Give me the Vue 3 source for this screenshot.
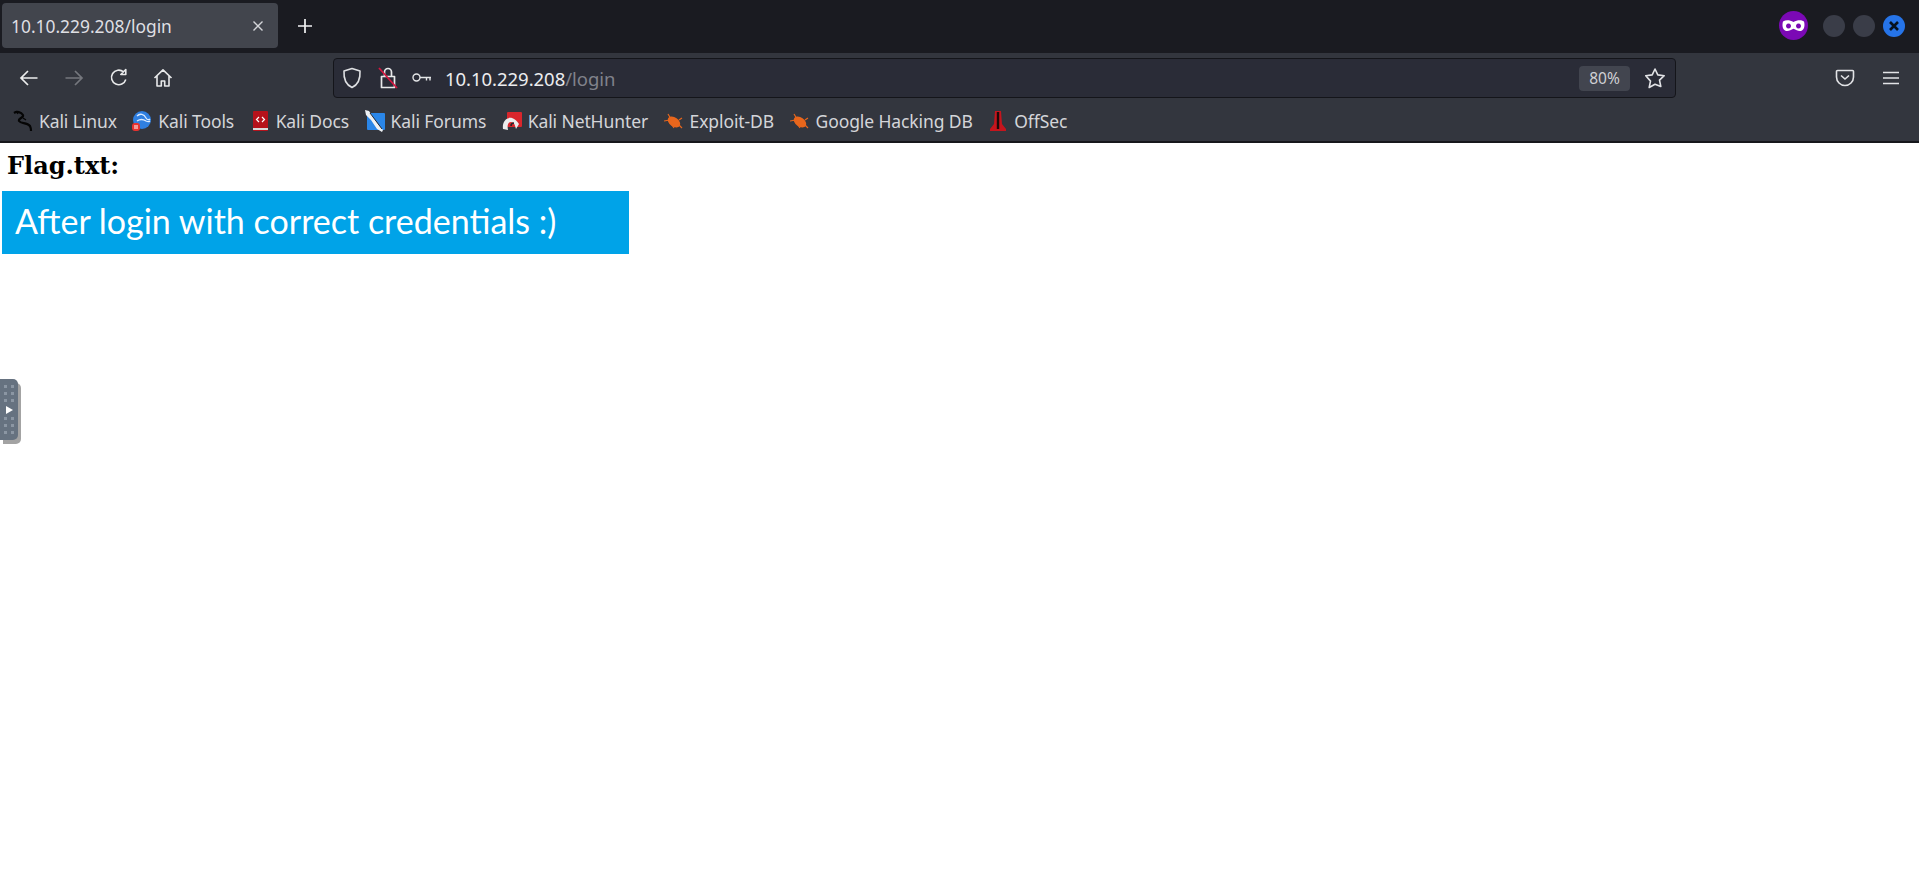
<script setup>
const bookmarks = [
  { id: 'dragon', label: 'Kali Linux' },
  { id: 'tools', label: 'Kali Tools' },
  { id: 'docs', label: 'Kali Docs' },
  { id: 'forums', label: 'Kali Forums' },
  { id: 'hunter', label: 'Kali NetHunter' },
  { id: 'bug', label: 'Exploit-DB' },
  { id: 'bug', label: 'Google Hacking DB' },
  { id: 'offsec', label: 'OffSec' }
]
const dots = Array.from({ length: 6 })
</script>

<template>
  <div class="page">
    <header class="tabbar">
      <div class="tab">
        <span class="tab-title">10.10.229.208/login</span>
        <svg class="tab-close" width="12" height="12" viewBox="0 0 12 12"><path d="M1.5 1.5l9 9M10.5 1.5l-9 9" stroke="#d4d5d9" stroke-width="1.4" fill="none"/></svg>
      </div>
      <svg class="new-tab" width="16" height="16" viewBox="0 0 16 16"><path d="M8 1v14M1 8h14" stroke="#f2f2f4" stroke-width="1.7" fill="none"/></svg>
      <div class="tabbar-right">
        <svg class="mask" width="29" height="29" viewBox="0 0 29 29">
          <circle cx="14.5" cy="14.5" r="14.5" fill="#7b09b5"/>
          <path fill-rule="evenodd" fill="#fff" d="M4 10.500c3-2 7-1.500 10.500.5 3.500-2 7.500-2.500 10.500-.5 1 3.500.5 7.500-2 9-3 1.500-5.500-.5-8.500-1.800-3 1.300-5.500 3.300-8.500 1.800-2.500-1.500-3-5.500-2-9zM9.500 12.500a2.500 2.500 0 1 0 .01 0zM19.500 12.500a2.500 2.500 0 1 0 .01 0z"/>
        </svg>
        <span class="win-btn first"></span>
        <span class="win-btn"></span>
        <span class="win-btn close">
          <svg width="12" height="12" viewBox="0 0 12 12"><path d="M2 2l8 8M10 2l-8 8" stroke="#06121f" stroke-width="2.600" fill="none"/></svg>
        </span>
      </div>
    </header>

    <div class="toolbar">
      <svg class="nav back" width="20" height="18" viewBox="0 0 20 18"><path d="M18.500 9H2M9 2L2 9l7 7" stroke="#eceded" stroke-width="1.700" fill="none"/></svg>
      <svg class="nav fwd" width="20" height="18" viewBox="0 0 20 18"><path d="M1.500 9H18M11 2l7 7-7 7" stroke="#75777d" stroke-width="1.700" fill="none"/></svg>
      <svg class="nav reload" width="20" height="22" viewBox="0 0 20 20"><path d="M16.800 11.500A7.300 7.300 0 1 1 14.500 3.800M16.800 1.500v5h-5z" stroke="#e8e9ea" stroke-width="1.600" fill="none" stroke-linejoin="round"/></svg>
      <svg class="nav home" width="20" height="22" viewBox="0 0 20 20"><path d="M1.500 10L10 1.800l8.500 8.200M4 8v10h4.300v-5h3.400v5H16V8" stroke="#e8e9ea" stroke-width="1.600" fill="none" stroke-linejoin="round"/></svg>

      <div class="urlbar">
        <svg class="u-shield" width="20" height="22" viewBox="0 0 20 22"><path d="M10 1.500l8 2.500c.5 8-1.500 13.500-8 16.500C3.500 17.500 1.500 12 2 4z" stroke="#dfe0e3" stroke-width="1.600" fill="none" stroke-linejoin="round"/></svg>
        <svg class="u-lock" width="20" height="24" viewBox="0 0 20 24">
          <path d="M6.500 10V6a3.500 3.500 0 0 1 7 0v4M3.500 10.500h13v11h-13z" stroke="#e8e9ea" stroke-width="1.700" fill="none" stroke-linejoin="round"/>
          <path d="M1 2l18 20" stroke="#d4163f" stroke-width="1.800"/>
        </svg>
        <svg class="u-key" width="20" height="12" viewBox="0 0 20 12"><circle cx="4.500" cy="5.500" r="3.500" stroke="#e4e5e7" stroke-width="1.400" fill="none"/><path d="M8 5.500h11M14.500 5.500v3M18 5.500v3" stroke="#e4e5e7" stroke-width="1.400" fill="none"/></svg>
        <span class="url"><span class="domain">10.10.229.208</span><span class="path">/login</span></span>
        <span class="zoom-badge">80%</span>
        <svg class="star" width="22" height="22" viewBox="0 0 22 22"><path d="M11 2l2.800 5.900 6.400.8-4.700 4.400 1.300 6.400L11 17.300l-5.800 3.200 1.300-6.400L1.800 8.700l6.400-.8z" stroke="#e2e3e6" stroke-width="1.600" fill="none" stroke-linejoin="round"/></svg>
      </div>

      <svg class="pocket" width="20" height="18" viewBox="0 0 20 18"><path d="M2.500 1.500h15a1 1 0 0 1 1 1V8a8.500 8.500 0 0 1-17 0V2.500a1 1 0 0 1 1-1z" stroke="#e2e3e6" stroke-width="1.600" fill="none"/><path d="M6 6.500l4 3.500 4-3.500" stroke="#e2e3e6" stroke-width="1.600" fill="none"/></svg>
      <svg class="menu" width="18" height="14" viewBox="0 0 18 14"><path d="M1 1.500h16M1 7h16M1 12.500h16" stroke="#e2e3e6" stroke-width="1.500" fill="none"/></svg>
    </div>

    <nav class="bookmarks">
      <a v-for="b in bookmarks" :key="b.label" class="bookmark" :class="'bm-' + b.id">
        <svg class="bm-icon" width="20" height="22" viewBox="0 0 20 22">
          <template v-if="b.id === 'dragon'">
            <path d="M1 3C4 1 8 2 10 5c1 3-5 3-4 6 2 3 8 1 11 5 1 2 1 3 1 5" stroke="#050505" stroke-width="2.200" fill="none"/>
            <path d="M3 1l2 3M10 8l3 2" stroke="#050505" stroke-width="1.200"/>
          </template>
          <template v-else-if="b.id === 'tools'">
            <circle cx="10" cy="10" r="9" fill="#2f7fe0"/>
            <path d="M5 6c3-3 7-2 9 2 1 2 3 2 4 1M5 11c3-2 6-2 9 0 2 1 3 1 4 0" stroke="#dbeafe" stroke-width="1.300" fill="none"/>
            <rect x="0" y="13" width="8" height="8" rx="3" fill="#e8322f"/>
            <path d="M3 15v4M5 15v4" stroke="#fff" stroke-width="1"/>
          </template>
          <template v-else-if="b.id === 'docs'">
            <rect x="3" y="1" width="15" height="20" rx="1" fill="#b5121b"/>
            <rect x="3" y="18" width="15" height="2" fill="#d9d9d9"/>
            <path d="M9 7l-2.500 2.500L9 12M12 7l2.500 2.500L12 12" stroke="#fff" stroke-width="1.200" fill="none"/>
          </template>
          <template v-else-if="b.id === 'forums'">
            <rect x="2" y="3" width="18" height="17" rx="1" fill="#2a86e8"/>
            <path d="M0 0l4 1 4 6 5 7 5 6-1 2-5-3-6-9L1 5z" fill="#eef1f4"/>
            <path d="M5 3l12 16" stroke="#23252b" stroke-width="1"/>
          </template>
          <template v-else-if="b.id === 'hunter'">
            <rect x="5" y="2" width="15" height="15" rx="1" fill="#d9262c"/>
            <path d="M1 19c-1-7 3-12 9-11 3 1 5 3 7 6l-3 5c-1-4-2-7-5-7s-4 3-3 8z" fill="#ececec"/>
            <path d="M9 16c0-2 1-3 3-3" stroke="#23252b" stroke-width="1.500" fill="none"/>
          </template>
          <template v-else-if="b.id === 'bug'">
            <ellipse cx="10" cy="12" rx="7" ry="4.500" transform="rotate(35 10 12)" fill="#e8661c"/>
            <path d="M0 11l6-1M4 4l3 5M10 18l-2-3M18 18l-3-3M18 8l-3 2" stroke="#e8661c" stroke-width="1.200"/>
          </template>
          <template v-else>
            <path d="M7 1h6l1 13 4 5v2H2v-2l4-5z" fill="#c5151d"/>
            <path d="M10 2v17" stroke="#1b0a0a" stroke-width="2.400"/>
          </template>
        </svg>
        <span>{{ b.label }}</span>
      </a>
    </nav>

    <main class="content">
      <h1 class="flag">Flag.txt:</h1>
      <div class="notice">After login with correct credentials :)</div>
    </main>

    <aside class="handle">
      <span class="dot-grid"><i v-for="(d, i) in dots" :key="i"></i></span>
      <span class="arrow"></span>
      <span class="dot-grid"><i v-for="(d, i) in dots" :key="i"></i></span>
    </aside>
  </div>
</template>

<style>
html, body { margin: 0; background: #fff; }
</style>

<style scoped>
.page {
  position: relative;
  height: 895px;
  overflow: hidden;
  background: #fff;
  font-family: "Noto Sans", sans-serif;
}
.tabbar {
  height: 53px;
  box-sizing: border-box;
  padding: 3px 0 5px 2px;
  display: flex;
  align-items: center;
  background: #1a1b21;
}
.tab {
  width: 276px;
  height: 45px;
  box-sizing: border-box;
  padding: 0 14px 0 9px;
  display: flex;
  align-items: center;
  justify-content: space-between;
  background: #42454d;
  border-radius: 4px;
}
.tab-title {
  font-size: 17.400px;
  color: #dfdfe3;
}
.new-tab { margin-left: 19px; }
.tabbar-right {
  margin-left: auto;
  margin-right: 14px;
  display: flex;
  align-items: center;
}
.win-btn {
  width: 22px;
  height: 22px;
  margin-left: 8px;
  border-radius: 50%;
  background: #3a3d48;
  display: flex;
  align-items: center;
  justify-content: center;
}
.win-btn.first { margin-left: 15px; }
.win-btn.close { background: #2674e8; }
.toolbar {
  height: 45px;
  box-sizing: border-box;
  padding-top: 5px;
  display: flex;
  align-items: center;
  background: #33363e;
}
.nav { flex: none; }
.back { margin-left: 19px; }
.fwd { margin-left: 25px; }
.reload { margin-left: 25px; }
.home { margin-left: 24px; }
.urlbar {
  width: 1343px;
  height: 40px;
  box-sizing: border-box;
  margin-left: 160px;
  display: flex;
  align-items: center;
  background: #2a2c37;
  border: 1px solid #14151a;
  border-radius: 4px;
}
.u-shield { margin-left: 8px; }
.u-lock { margin-left: 16px; }
.u-key { margin-left: 14px; }
.url {
  margin-left: 13px;
  font-size: 18.500px;
  letter-spacing: -0.04px;
  white-space: nowrap;
}
.domain { color: #ececef; }
.path { color: #80828b; }
.zoom-badge {
  width: 51px;
  height: 25px;
  margin-left: auto;
  padding-bottom: 1px;
  box-sizing: border-box;
  display: flex;
  align-items: center;
  justify-content: center;
  font-size: 15.500px;
  color: #cfd0d4;
  background: #42454f;
  border-radius: 4px;
}
.star { margin: 0 9px 0 14px; }
.pocket { margin-left: 159px; }
.menu { margin-left: 27px; }
.bookmarks {
  height: 45px;
  box-sizing: border-box;
  border-bottom: 2px solid #16171b;
  padding: 3px 0 0 13px;
  display: flex;
  align-items: center;
  background: #33363e;
}
.bookmark {
  display: flex;
  align-items: center;
  gap: 6px;
  margin-right: 15.500px;
  font-size: 17.500px;
  letter-spacing: -0.1px;
  color: #d4d5d9;
  white-space: nowrap;
}
.bm-icon { flex: none; }
.content { display: block; }
.flag {
  margin: 0;
  padding: 8px 0 0 7px;
  height: 48px;
  box-sizing: border-box;
  font-family: "DejaVu Serif", serif;
  font-size: 24px;
  line-height: 30px;
  font-weight: 700;
  color: #000;
}
.notice {
  width: 627px;
  height: 63px;
  box-sizing: border-box;
  margin-left: 2px;
  padding: 0 0 4px 13px;
  display: flex;
  align-items: center;
  background: #00a3e8;
  color: #fff;
  font-family: Lato, "Noto Sans", sans-serif;
  font-size: 34px;
  white-space: nowrap;
}
.handle {
  position: absolute;
  left: 0;
  top: 379px;
  width: 18px;
  height: 61px;
  box-sizing: border-box;
  padding: 6px 0;
  display: flex;
  flex-direction: column;
  align-items: center;
  justify-content: space-between;
  background: #667280;
  border-radius: 0 5px 5px 0;
  box-shadow: 3px 4px 0 #a3a3a3;
}
.dot-grid {
  display: grid;
  grid-template-columns: repeat(2, 3px);
  gap: 4px;
}
.dot-grid i {
  width: 3px;
  height: 3px;
  background: #8b96a3;
}
.arrow {
  width: 0;
  height: 0;
  border-left: 7px solid #fff;
  border-top: 4px solid transparent;
  border-bottom: 4px solid transparent;
}
</style>
